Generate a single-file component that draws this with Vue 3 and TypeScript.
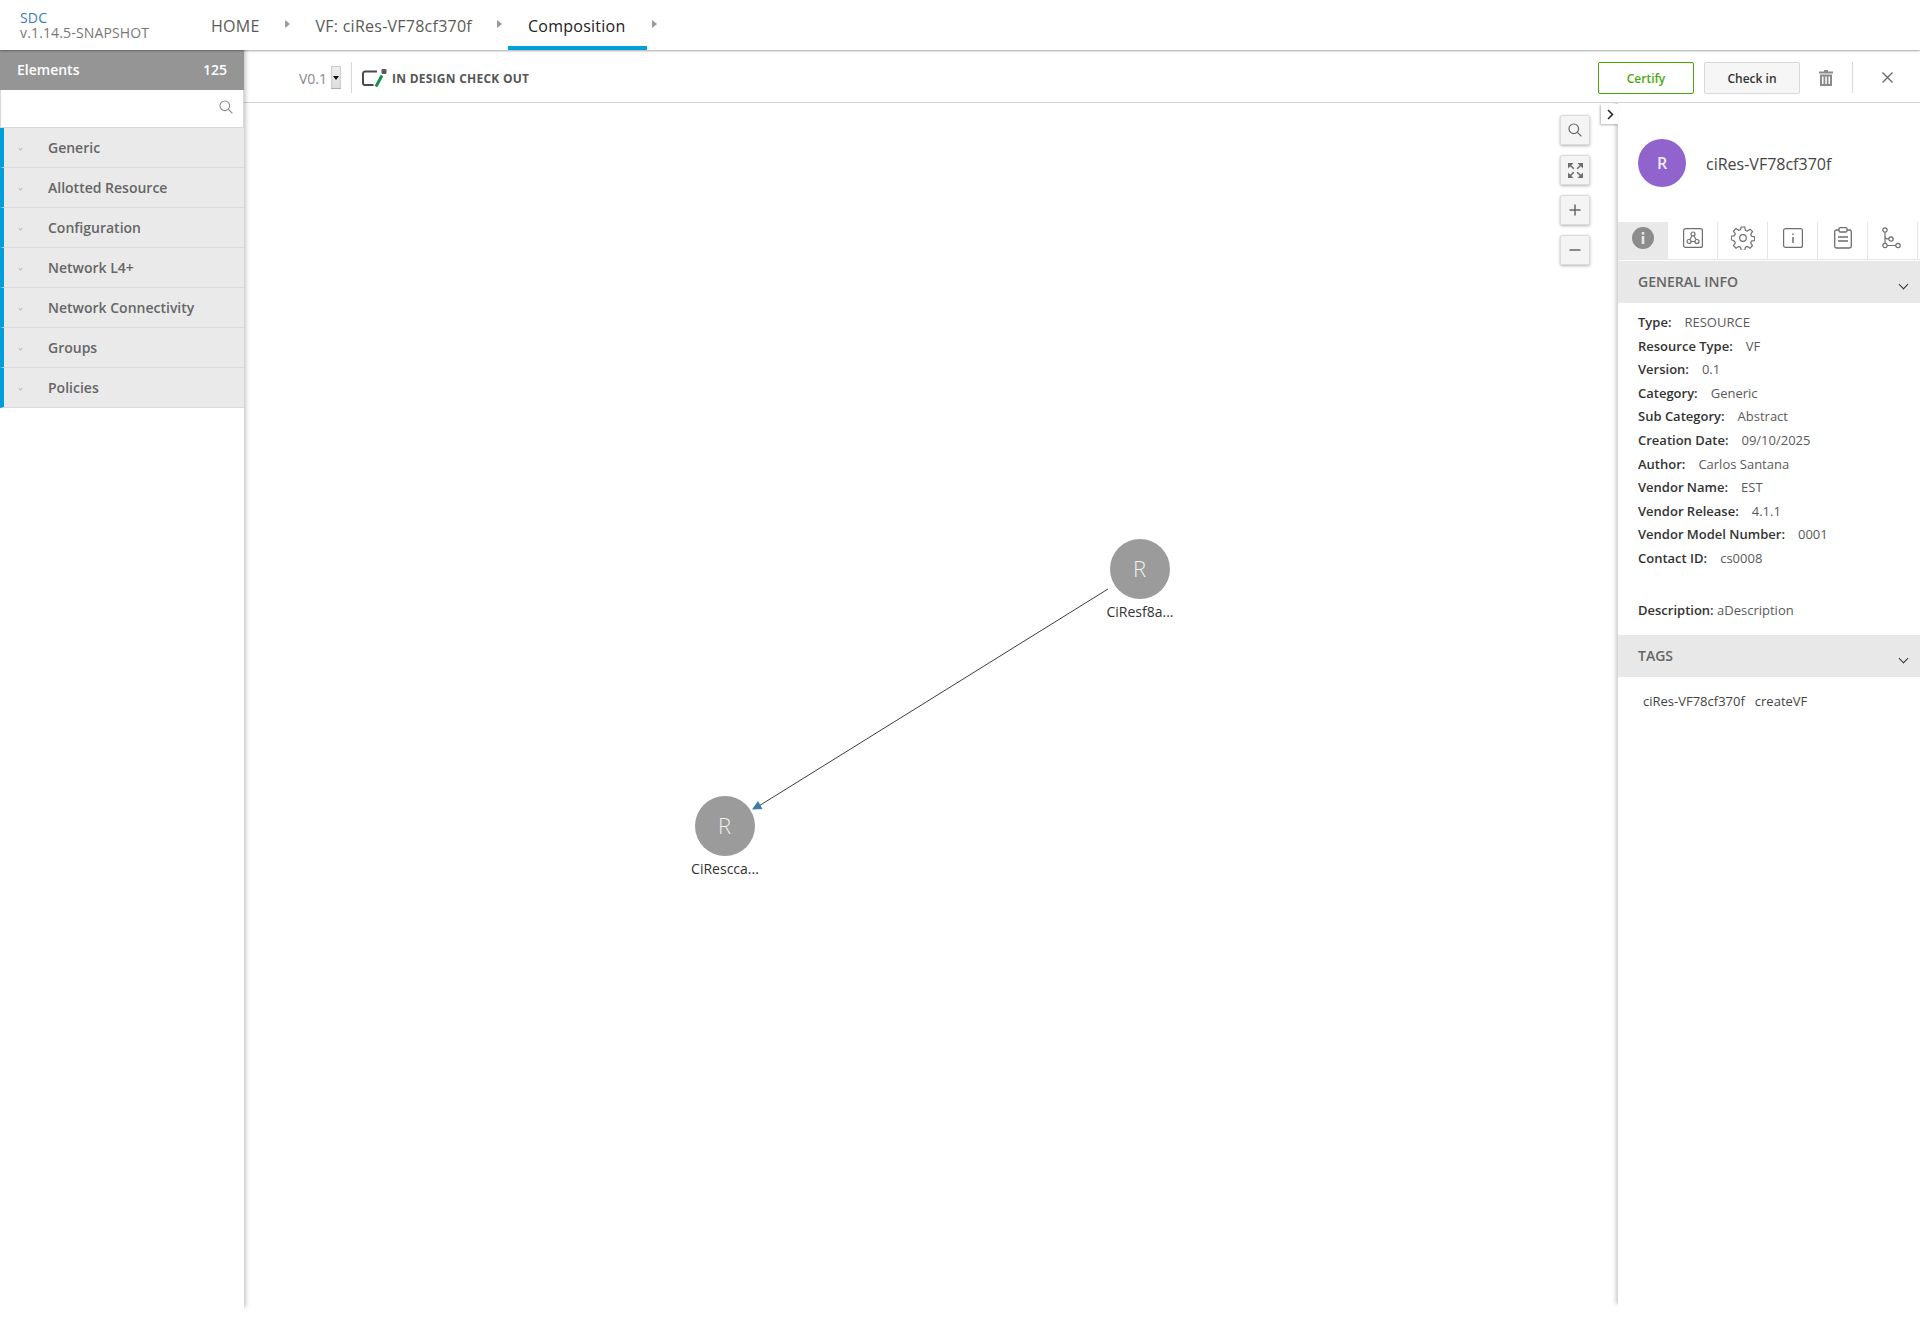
<template>
  <div class="page">
    <header class="topnav">
      <div class="brand">
        <div class="brand-name">SDC</div>
        <div class="brand-version">v.1.14.5-SNAPSHOT</div>
      </div>
      <nav class="crumbs">
        <div v-for="c in crumbs" :key="c.label" class="crumb" :class="{ active: c.active }">
          <span class="crumb-label">{{ c.label }}</span>
          <span class="crumb-arrow"></span>
        </div>
      </nav>
    </header>

    <div class="body">
      <aside class="palette">
        <div class="palette-head">
          <span>Elements</span>
          <span>125</span>
        </div>
        <div class="palette-search">
          <svg width="14" height="14" viewBox="0 0 14 14" fill="none" stroke="#8a8a8a" stroke-width="1.1">
            <circle cx="5.8" cy="5.8" r="4.8" />
            <path d="M9.4 9.4l4 4" />
          </svg>
        </div>
        <ul class="palette-list">
          <li v-for="g in groups" :key="g" class="palette-item">
            <span class="item-caret"></span>
            <span>{{ g }}</span>
          </li>
        </ul>
      </aside>

      <main class="workspace">
        <div class="toolbar">
          <div class="version">
            <span class="version-label">V0.1</span>
            <span class="version-select"><i></i></span>
          </div>
          <div class="tool-sep"></div>
          <svg class="state-icon" width="25" height="18" viewBox="0 0 25 18" fill="none">
            <path d="M15 2.5H3A2 2 0 0 0 1 4.5V14a2 2 0 0 0 2 2h8.5" stroke="#4a4a4a" stroke-width="2" />
            <rect x="19.5" y="0" width="5" height="5" rx="1.2" fill="#5a5a5a" />
            <path d="M20 6.5L14 17.5" stroke="#12914a" stroke-width="3" />
          </svg>
          <span class="state-text">IN DESIGN CHECK OUT</span>
          <div class="tool-actions">
            <button class="btn certify">Certify</button>
            <button class="btn checkin">Check in</button>
            <svg class="trash" width="14" height="16" viewBox="0 0 14 16" fill="#8a8a8a">
              <path d="M5 0h4v1.5h5v2H0v-2h5zM1 4.5h12V16H1zM3 6.5V14h1.5V6.5zM6.25 6.5V14h1.5V6.5zM9.5 6.5V14H11V6.5z" fill-rule="evenodd" />
            </svg>
            <div class="tool-sep action-sep"></div>
            <svg class="close" width="11" height="11" viewBox="0 0 11 11" stroke="#666" stroke-width="1.3" fill="none">
              <path d="M.5.5l10 10M10.5.5l-10 10" />
            </svg>
          </div>
        </div>

        <div class="main-row">
          <section class="canvas">
            <svg class="edge" width="1360" height="1200">
              <line x1="864" y1="486" x2="510" y2="706" stroke="#3c3c3c" stroke-width="1" />
              <path d="M508 706.5l6-8.5 4.5 8z" fill="#3a7fa5" />
            </svg>
            <div v-for="n in nodes" :key="n.label" class="node" :style="{ left: n.x + 'px', top: n.y + 'px' }">
              <div class="node-circle">R</div>
              <div class="node-label">{{ n.label }}</div>
            </div>
            <div class="zoom-tools">
              <button class="zoom-btn">
                <svg width="14" height="14" viewBox="0 0 14 14" fill="none" stroke="#666" stroke-width="1.2">
                  <circle cx="5.8" cy="5.8" r="4.8" />
                  <path d="M9.4 9.4l4 4" />
                </svg>
              </button>
              <button class="zoom-btn">
                <svg width="15" height="15" viewBox="0 0 15 15" fill="#6e6e6e" stroke="#6e6e6e" stroke-width="1.6">
                  <path d="M2 2l3.8 3.8M13 2L9.2 5.8M2 13l3.8-3.8M13 13L9.2 9.2" fill="none" />
                  <path d="M0 0h5.5L0 5.5zM15 0v5.5L9.5 0zM0 15V9.5L5.5 15zM15 15H9.5L15 9.5z" stroke="none" />
                </svg>
              </button>
              <button class="zoom-btn">
                <svg width="12" height="12" viewBox="0 0 12 12" stroke="#666" stroke-width="1.5">
                  <path d="M6 .5v11M.5 6h11" />
                </svg>
              </button>
              <button class="zoom-btn">
                <svg width="12" height="12" viewBox="0 0 12 12" stroke="#666" stroke-width="1.5">
                  <path d="M.5 6h11" />
                </svg>
              </button>
            </div>
          </section>

          <aside class="details">
            <button class="collapse">
              <svg width="7" height="11" viewBox="0 0 7 11" fill="none" stroke="#222" stroke-width="1.5">
                <path d="M1 1l4.5 4.5L1 10" />
              </svg>
            </button>
            <div class="details-head">
              <div class="avatar">R</div>
              <div class="details-name">ciRes-VF78cf370f</div>
            </div>

            <div class="tabs">
              <div class="tab selected">
                <svg width="22" height="22" viewBox="0 0 22 22">
                  <circle cx="11" cy="11" r="11" fill="#8c8c8c" />
                  <rect x="9.7" y="5" width="2.6" height="2.6" fill="#e6e6e6" />
                  <rect x="9.7" y="9" width="2.6" height="8" fill="#e6e6e6" />
                </svg>
              </div>
              <div class="tab">
                <svg width="20" height="20" viewBox="0 0 20 20" fill="none" stroke="#6e6e6e" stroke-width="1.2">
                  <rect x=".6" y=".6" width="18.8" height="18.8" rx="2" />
                  <circle cx="10" cy="6" r="2" />
                  <circle cx="6" cy="13.5" r="2" />
                  <circle cx="14" cy="13.5" r="2" />
                  <path d="M9 7.8l-2.2 4M11 7.8l2.2 4M8 13.5h4" />
                </svg>
              </div>
              <div class="tab">
                <svg width="24" height="24" viewBox="0 0 24 24" fill="none" stroke="#6e6e6e" stroke-width="1.2">
                  <circle cx="12" cy="12" r="3.3" />
                  <path d="M10.2 1h3.6l.6 3.2 1.9.8 2.7-1.8 2.5 2.5-1.8 2.7.8 1.9 3.2.6v3.6l-3.2.6-.8 1.9 1.8 2.7-2.5 2.5-2.7-1.8-1.9.8-.6 3.2h-3.6l-.6-3.2-1.9-.8-2.7 1.8-2.5-2.5 1.8-2.7-.8-1.9L.3 13.8v-3.6l3.2-.6.8-1.9-1.8-2.7 2.5-2.5 2.7 1.8 1.9-.8z" />
                </svg>
              </div>
              <div class="tab">
                <svg width="20" height="20" viewBox="0 0 20 20" fill="none" stroke="#6e6e6e" stroke-width="1.2">
                  <rect x=".6" y=".6" width="18.8" height="18.8" rx="2" />
                  <path d="M10 5.5v1.6M10 9v6" stroke-width="1.5" />
                </svg>
              </div>
              <div class="tab">
                <svg width="18" height="22" viewBox="0 0 18 22" fill="none" stroke="#6e6e6e" stroke-width="1.3">
                  <path d="M5 3H2.5A1.8 1.8 0 0 0 .7 4.8v14.5A1.8 1.8 0 0 0 2.5 21h13a1.8 1.8 0 0 0 1.8-1.7V4.800A1.8 1.8 0 0 0 15.5 3H13" />
                  <rect x="5" y=".7" width="8" height="4.3" rx="1.2" />
                  <path d="M4 10h10M4 14h10" />
                </svg>
              </div>
              <div class="tab">
                <svg class="flow-icon" width="20" height="22" viewBox="0 0 20 22" fill="none" stroke="#6e6e6e" stroke-width="1.2">
                  <circle cx="4" cy="3" r="2.2" />
                  <circle cx="4" cy="18.5" r="2.2" />
                  <circle cx="10" cy="12" r="2.2" />
                  <circle cx="17" cy="18.5" r="2.2" />
                  <path d="M4 5.2v11M4 9.5c0 2 2 2.5 3.8 2.5M6.2 18.5h8.6" />
                </svg>
              </div>
            </div>

            <div class="section-head">
              <span>GENERAL INFO</span>
              <span class="chevron"></span>
            </div>
            <div class="info">
              <div v-for="f in fields" :key="f.label" class="info-row">
                <span class="info-label">{{ f.label }}:</span>
                <span class="info-value">{{ f.value }}</span>
              </div>
              <div class="info-desc">
                <span class="info-label">Description:</span> aDescription
              </div>
            </div>

            <div class="section-head tags-head">
              <span>TAGS</span>
              <span class="chevron"></span>
            </div>
            <div class="tags">
              <span>ciRes-VF78cf370f</span>
              <span>createVF</span>
            </div>
          </aside>
        </div>
      </main>
    </div>
  </div>
</template>

<script setup lang="ts">
interface Crumb {
  label: string
  active?: boolean
}

const crumbs: Crumb[] = [
  { label: "HOME" },
  { label: "VF: ciRes-VF78cf370f" },
  { label: "Composition", active: true },
]

const groups = [
  "Generic",
  "Allotted Resource",
  "Configuration",
  "Network L4+",
  "Network Connectivity",
  "Groups",
  "Policies",
]

// node positions are relative to the canvas
const nodes = [
  { label: "CiResf8a...", x: 861, y: 436 },
  { label: "CiRescca...", x: 446, y: 693 },
]

const fields = [
  { label: "Type", value: "RESOURCE" },
  { label: "Resource Type", value: "VF" },
  { label: "Version", value: "0.1" },
  { label: "Category", value: "Generic" },
  { label: "Sub Category", value: "Abstract" },
  { label: "Creation Date", value: "09/10/2025" },
  { label: "Author", value: "Carlos Santana" },
  { label: "Vendor Name", value: "EST" },
  { label: "Vendor Release", value: "4.1.1" },
  { label: "Vendor Model Number", value: "0001" },
  { label: "Contact ID", value: "cs0008" },
]
</script>

<style>
html,
body {
  margin: 0;
  background: #fff;
}
</style>

<style scoped>
.page {
  width: 1920px;
  height: 1319px;
  overflow: hidden;
  font-family: "Open Sans", sans-serif;
  color: #5a5a5a;
  display: flex;
  flex-direction: column;
}
.topnav {
  height: 50px;
  flex: none;
  display: flex;
  background: #fff;
  box-shadow: 0 1px 2px rgba(0, 0, 0, 0.35);
  position: relative;
  z-index: 3;
}
.brand {
  width: 211px;
  padding: 10px 0 0 20px;
  box-sizing: border-box;
  font-size: 14px;
  line-height: 15px;
  letter-spacing: 0.15px;
}
.brand-name {
  color: #3a7cb8;
}
.brand-version {
  color: #777;
}
.crumbs {
  display: flex;
}
.crumb {
  display: flex;
  height: 50px;
  box-sizing: border-box;
}
.crumb-label {
  font-size: 16px;
  line-height: 52px;
  letter-spacing: 0.25px;
  padding: 0 20px 0 0;
  color: #5a5a5a;
}
.crumb-arrow {
  width: 0;
  height: 0;
  margin: 20px 26px 0 5px;
  border-left: 5px solid #999;
  border-top: 4.5px solid transparent;
  border-bottom: 4.5px solid transparent;
}
.crumb.active .crumb-label {
  color: #222;
  padding: 0 21px 0 20px;
  margin-left: -20px;
  border-bottom: 4px solid #009fdb;
  height: 46px;
}
.body {
  flex: 1;
  display: flex;
  min-height: 0;
}
.palette {
  width: 244px;
  flex: none;
  height: 1262px;
  background: #fff;
  box-shadow: 3px -4px 4px -1px rgba(0, 0, 0, 0.22);
  position: relative;
  z-index: 2;
}
.palette-head {
  height: 40px;
  background: #959595;
  color: #fff;
  font-size: 14px;
  font-weight: 600;
  display: flex;
  justify-content: space-between;
  align-items: center;
  padding: 0 17px 2px;
  box-sizing: border-box;
}
.palette-search {
  height: 37px;
  box-sizing: content-box;
  border: 1px solid #d8d8d8;
  border-top: 0;
  display: flex;
  align-items: center;
  justify-content: flex-end;
  padding-right: 10px;
}
.palette-search svg {
  margin-top: -4px;
}
.palette-list {
  list-style: none;
  margin: 0;
  padding: 0;
}
.palette-item {
  height: 39px;
  border-bottom: 1px solid #dcdcdc;
  border-left: 4px solid #009fdb;
  background: #eaeaea;
  display: flex;
  align-items: center;
  font-size: 14px;
  font-weight: 600;
  color: #666;
}
.item-caret {
  width: 2px;
  height: 2px;
  margin: 2px 26px 0 15px;
  border-right: 1px solid #b5b5b5;
  border-bottom: 1px solid #b5b5b5;
  transform: rotate(45deg);
}
.workspace {
  flex: 1;
  display: flex;
  flex-direction: column;
  min-width: 0;
}
.toolbar {
  height: 53px;
  flex: none;
  box-sizing: border-box;
  padding: 3px 0 0 55px;
  border-bottom: 1px solid #d2d2d2;
  display: flex;
  align-items: center;
  background: #fff;
  position: relative;
  z-index: 1;
}
.version {
  display: flex;
  align-items: center;
  gap: 4px;
}
.version-label {
  font-size: 14px;
  color: #888;
  margin-top: 2px;
}
.version-select {
  width: 8px;
  height: 21px;
  background: linear-gradient(#eee, #ddd);
  border: 1px solid #ccc;
  border-bottom-color: #aaa;
  display: flex;
  align-items: center;
  justify-content: center;
}
.version-select i {
  border-top: 4px solid #111;
  border-left: 3px solid transparent;
  border-right: 3px solid transparent;
}
.tool-sep {
  width: 1px;
  height: 31px;
  background: #d8d8d8;
  margin: 0 10px;
}
.state-text {
  font-size: 12px;
  font-weight: 700;
  letter-spacing: 0.25px;
  color: #555;
  margin: 2px 0 0 5px;
}
.tool-actions {
  margin-left: auto;
  display: flex;
  align-items: center;
}
.btn {
  width: 96px;
  height: 32px;
  border-radius: 2px;
  font-family: inherit;
  font-size: 12px;
  font-weight: 600;
  padding: 1px 0 0;
}
.certify {
  background: #fff;
  border: 1px solid #4ca90c;
  color: #4ca90c;
}
.checkin {
  background: #f6f6f6;
  border: 1px solid #d8d8d8;
  color: #333;
  margin-left: 10px;
}
.trash {
  margin-left: 19px;
}
.action-sep {
  margin: 0 0 0 19px;
}
.close {
  margin: 0 27px 0 29px;
}
.main-row {
  flex: 1;
  display: flex;
  min-height: 0;
}
.canvas {
  flex: 1;
  position: relative;
  background: #fff;
}
.edge {
  position: absolute;
  left: 0;
  top: 0;
}
.node {
  position: absolute;
  width: 70px;
  text-align: center;
}
.node-circle {
  width: 60px;
  height: 60px;
  margin: 0 auto;
  border-radius: 50%;
  background: #9b9b9b;
  color: #f0f0f0;
  font-size: 22px;
  font-weight: 300;
  line-height: 58px;
  text-indent: -1px;
}
.node-label {
  font-size: 14px;
  color: #333;
  margin-top: 3px;
  white-space: nowrap;
}
.zoom-tools {
  position: absolute;
  top: 12px;
  right: 28px;
  display: flex;
  flex-direction: column;
  gap: 10px;
}
.zoom-btn {
  width: 30px;
  height: 30px;
  padding: 0;
  background: #f4f4f4;
  border: 1px solid #dcdcdc;
  border-radius: 2px;
  box-shadow: 0 1px 3px rgba(0, 0, 0, 0.3);
  display: flex;
  align-items: center;
  justify-content: center;
}
.details {
  width: 302px;
  flex: none;
  height: 1206px;
  position: relative;
  background: #fff;
  box-shadow: -3px -4px 4px -1px rgba(0, 0, 0, 0.22);
}
.collapse {
  position: absolute;
  top: 1px;
  left: -17px;
  width: 17px;
  height: 20px;
  padding: 0 0 0 2px;
  background: #fff;
  border: 0;
  box-shadow: -1px 1px 2px rgba(0, 0, 0, 0.3);
  display: flex;
  align-items: center;
  justify-content: center;
}
.details-head {
  height: 119px;
  box-sizing: border-box;
  padding: 36px 0 0 20px;
  display: flex;
  align-items: flex-start;
  gap: 20px;
}
.avatar {
  width: 48px;
  height: 48px;
  border-radius: 50%;
  background: #9063cd;
  color: #f3eefa;
  font-size: 16px;
  font-weight: 600;
  line-height: 48px;
  text-align: center;
}
.details-name {
  font-size: 16px;
  color: #444;
  line-height: 50px;
}
.tabs {
  height: 37px;
  display: flex;
  border-bottom: 1px solid #e6e6e6;
}
.tab {
  width: 50px;
  flex: none;
  box-sizing: border-box;
  border-right: 1px solid #e6e6e6;
  display: flex;
  align-items: center;
  justify-content: center;
  padding-bottom: 5px;
}
.tab.selected {
  background: #e9e9e9;
  border-right: 0;
}
.flow-icon {
  margin-left: -3px;
}
.section-head {
  height: 42px;
  margin-top: 1px;
  box-sizing: border-box;
  padding: 0 13px 2px 20px;
  background: #e8e8e8;
  display: flex;
  align-items: center;
  justify-content: space-between;
  font-size: 14px;
  font-weight: 600;
  color: #666;
}
.chevron {
  width: 6px;
  height: 6px;
  margin-top: 6px;
  border-right: 1.5px solid #333;
  border-bottom: 1.5px solid #333;
  transform: rotate(45deg);
}
.info {
  height: 332px;
  box-sizing: border-box;
  padding: 8px 0 0 20px;
  font-size: 13px;
  color: #5a5a5a;
}
.info-row {
  height: 23.6px;
  line-height: 23.6px;
  white-space: nowrap;
}
.info-label {
  font-weight: 600;
  color: #333;
}
.info-value {
  margin-left: 13px;
}
.info-desc {
  margin-top: 27px;
  line-height: 24px;
}
.tags-head {
  margin-top: 0;
}
.tags {
  padding: 14px 0 0 25px;
  font-size: 13px;
  line-height: 20px;
  color: #444;
  display: flex;
  gap: 10px;
}
</style>
